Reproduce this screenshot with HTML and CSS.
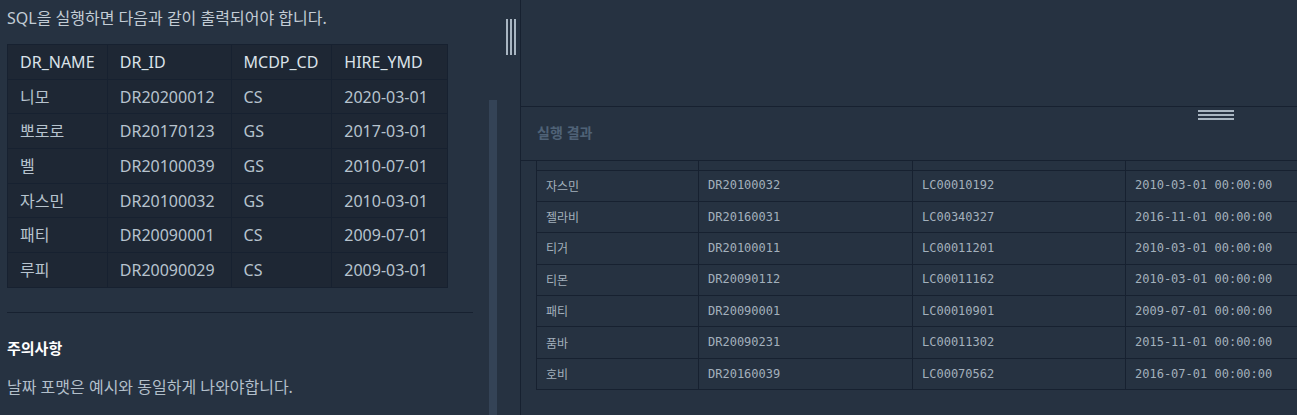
FILE: index.html
```html
<!DOCTYPE html>
<html lang="ko">
<head>
<meta charset="utf-8">
<title>SQL 결과</title>
<link rel="stylesheet" href="styles.css">
</head>
<body>
<div class="page">
  <section class="left-pane">
    <div class="content">
      <p class="intro">SQL을 실행하면 다음과 같이 출력되어야 합니다.</p>
      <table class="example">
        <thead>
          <tr><th class="c1">DR_NAME</th><th class="c2">DR_ID</th><th class="c3">MCDP_CD</th><th class="c4">HIRE_YMD</th></tr>
        </thead>
        <tbody>
          <tr><td>니모</td><td>DR20200012</td><td>CS</td><td>2020-03-01</td></tr>
          <tr><td>뽀로로</td><td>DR20170123</td><td>GS</td><td>2017-03-01</td></tr>
          <tr><td>벨</td><td>DR20100039</td><td>GS</td><td>2010-07-01</td></tr>
          <tr><td>자스민</td><td>DR20100032</td><td>GS</td><td>2010-03-01</td></tr>
          <tr><td>패티</td><td>DR20090001</td><td>CS</td><td>2009-07-01</td></tr>
          <tr><td>루피</td><td>DR20090029</td><td>CS</td><td>2009-03-01</td></tr>
        </tbody>
      </table>
      <hr class="divider">
      <h5 class="notice-title">주의사항</h5>
      <p class="notice">날짜 포맷은 예시와 동일하게 나와야합니다.</p>
    </div>
    <div class="scroll-track"><div class="scroll-thumb"></div></div>
    <div class="v-handle"><span></span><span></span><span></span></div>
  </section>
  <section class="right-pane">
    <div class="editor"></div>
    <div class="result-header">
      <span class="result-title">실행 결과</span>
      <div class="h-handle"><span></span><span></span><span></span></div>
    </div>
    <div class="result-body">
      <table class="result">
        <tbody>
          <tr class="partial"><td class="r1"></td><td class="r2"></td><td class="r3"></td><td class="r4"></td></tr>
          <tr><td>자스민</td><td class="mono">DR20100032</td><td class="mono">LC00010192</td><td class="mono">2010-03-01 00:00:00</td></tr>
          <tr><td>젤라비</td><td class="mono">DR20160031</td><td class="mono">LC00340327</td><td class="mono">2016-11-01 00:00:00</td></tr>
          <tr><td>티거</td><td class="mono">DR20100011</td><td class="mono">LC00011201</td><td class="mono">2010-03-01 00:00:00</td></tr>
          <tr><td>티몬</td><td class="mono">DR20090112</td><td class="mono">LC00011162</td><td class="mono">2010-03-01 00:00:00</td></tr>
          <tr><td>패티</td><td class="mono">DR20090001</td><td class="mono">LC00010901</td><td class="mono">2009-07-01 00:00:00</td></tr>
          <tr><td>품바</td><td class="mono">DR20090231</td><td class="mono">LC00011302</td><td class="mono">2015-11-01 00:00:00</td></tr>
          <tr><td>호비</td><td class="mono">DR20160039</td><td class="mono">LC00070562</td><td class="mono">2016-07-01 00:00:00</td></tr>
        </tbody>
      </table>
    </div>
  </section>
</div>
</body>
</html>
```
FILE: styles.css
```css
* { box-sizing: border-box; }
html, body {
  margin: 0;
  padding: 0;
  background: #263241;
  width: 1297px;
  height: 415px;
  overflow: hidden;
}
body {
  font-family: "Noto Sans", "Noto Sans CJK KR", sans-serif;
  color: #b7c3ce;
}
.page {
  display: flex;
  height: 415px;
}
.left-pane {
  width: 521px;
  flex: none;
  display: flex;
  border-right: 1px solid #172130;
  height: 415px;
}
.content {
  width: 466px;
  margin-left: 7px;
  flex: none;
}
.intro {
  margin: 6px 0 0 0;
  font-size: 16px;
  line-height: 24px;
  color: #c2ccd5;
}
.example {
  margin-top: 14px;
  border-collapse: collapse;
  background: #1e2734;
  font-size: 16px;
  width: 441px;
}
.example th, .example td {
  border: 1px solid #172130;
  text-align: left;
  font-weight: 400;
  height: 34.7px;
  padding: 0 0 0 12px;
  line-height: 24px;
  white-space: nowrap;
}
.example th { color: #dbe2e9; }
.example td { color: #b7c3ce; }
.example .c1 { width: 100px; }
.example .c2 { width: 124px; }
.example .c3 { width: 101px; }
.example .c4 { width: 116px; }
.divider {
  margin: 24px 0 0 0;
  border: 0;
  border-top: 1px solid #172130;
  height: 0;
}
.notice-title {
  margin: 24px 0 0 0;
  font-size: 15px;
  line-height: 22px;
  font-weight: 700;
  color: #ffffff;
}
.notice {
  margin: 16px 0 0 0;
  font-size: 16px;
  line-height: 24px;
  color: #b2bfca;
}
.scroll-track {
  width: 8px;
  margin-left: 16px;
  padding-top: 100px;
  flex: none;
}
.scroll-thumb {
  width: 8px;
  height: 315px;
  background: #344356;
}
.v-handle {
  margin-left: 9px;
  margin-top: 19px;
  display: flex;
  gap: 2px;
  height: 36px;
}
.v-handle span {
  width: 2px;
  height: 36px;
  background: #a9b6c2;
}
.right-pane {
  flex: 1;
  display: flex;
  flex-direction: column;
  min-width: 0;
  overflow: hidden;
}
.editor {
  height: 107px;
  border-bottom: 1px solid #172130;
  flex: none;
}
.result-header {
  height: 54px;
  border-bottom: 1px solid #172130;
  flex: none;
  display: flex;
  align-items: center;
  padding-left: 16px;
  padding-bottom: 3px;
  position: relative;
}
.result-title {
  font-size: 14px;
  font-weight: 700;
  color: #4f6277;
  font-family: "Noto Sans CJK KR", sans-serif;
}
.h-handle {
  position: absolute;
  left: 677px;
  top: 3px;
  display: flex;
  flex-direction: column;
  gap: 2px;
}
.h-handle span {
  width: 36px;
  height: 2px;
  background: #a9b6c2;
}
.result-body {
  padding-left: 15px;
}
.result {
  border-collapse: collapse;
  table-layout: fixed;
  width: 802px;
  font-size: 12px;
  color: #a3b0bc;
}
.result td {
  border: 1px solid #172130;
  height: 31.4px;
  padding: 0 0 1px 9px;
  white-space: nowrap;
  font-family: "Noto Sans CJK KR", sans-serif;
}
.result .mono {
  font-family: "DejaVu Sans Mono", monospace;
}
.result tr.partial td {
  height: 9px;
  border-top: 0;
}
.result .r1 { width: 162px; }
.result .r2 { width: 214px; }
.result .r3 { width: 213px; }
.result .r4 { width: 213px; }
```
